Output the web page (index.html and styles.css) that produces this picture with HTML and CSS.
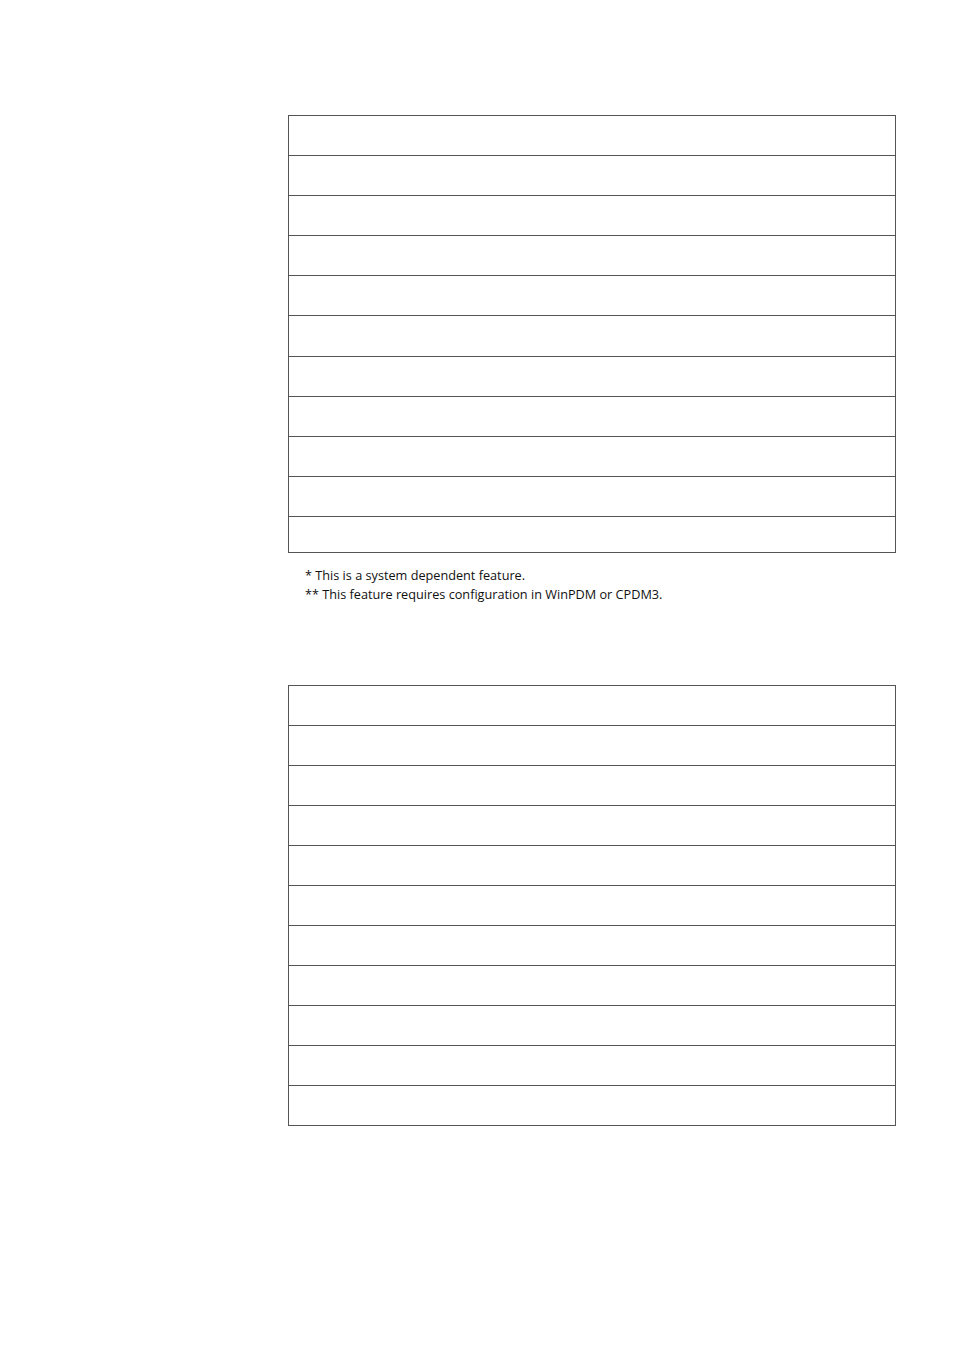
FILE: index.html
```html
<!DOCTYPE html>
<html>
<head>
<meta charset="utf-8">
<link rel="stylesheet" href="styles.css">
</head>
<body>
<div class="page">
  <div class="grid first">
    <div class="row"></div>
    <div class="row"></div>
    <div class="row"></div>
    <div class="row"></div>
    <div class="row"></div>
    <div class="row tall"></div>
    <div class="row"></div>
    <div class="row"></div>
    <div class="row"></div>
    <div class="row"></div>
    <div class="row last"></div>
  </div>
  <div class="notes">
    <p>* This is a system dependent feature.</p>
    <p>** This feature requires configuration in WinPDM or CPDM3.</p>
  </div>
  <div class="grid second">
    <div class="row"></div>
    <div class="row"></div>
    <div class="row"></div>
    <div class="row"></div>
    <div class="row"></div>
    <div class="row"></div>
    <div class="row"></div>
    <div class="row"></div>
    <div class="row"></div>
    <div class="row"></div>
    <div class="row"></div>
  </div>
</div>
</body>
</html>
```

FILE: styles.css
```css
html, body {
  margin: 0;
  padding: 0;
  background: #ffffff;
}

.page {
  padding: 115px 0 0 288px;
  font-family: "Open Sans", "Noto Sans", sans-serif;
  color: #111111;
}

.grid {
  width: 606px;
  border: 1px solid #555555;
  border-bottom: none;
}

.row {
  height: 39px;
  border-bottom: 1px solid #555555;
}

.row.tall {
  height: 40px;
}

.row.last {
  height: 35px;
}

.notes {
  padding: 13px 0 0 17px;
  height: 132px;
  box-sizing: border-box;
  font-size: 12.7px;
  line-height: 19px;
}

.notes p {
  margin: 0;
}
```
